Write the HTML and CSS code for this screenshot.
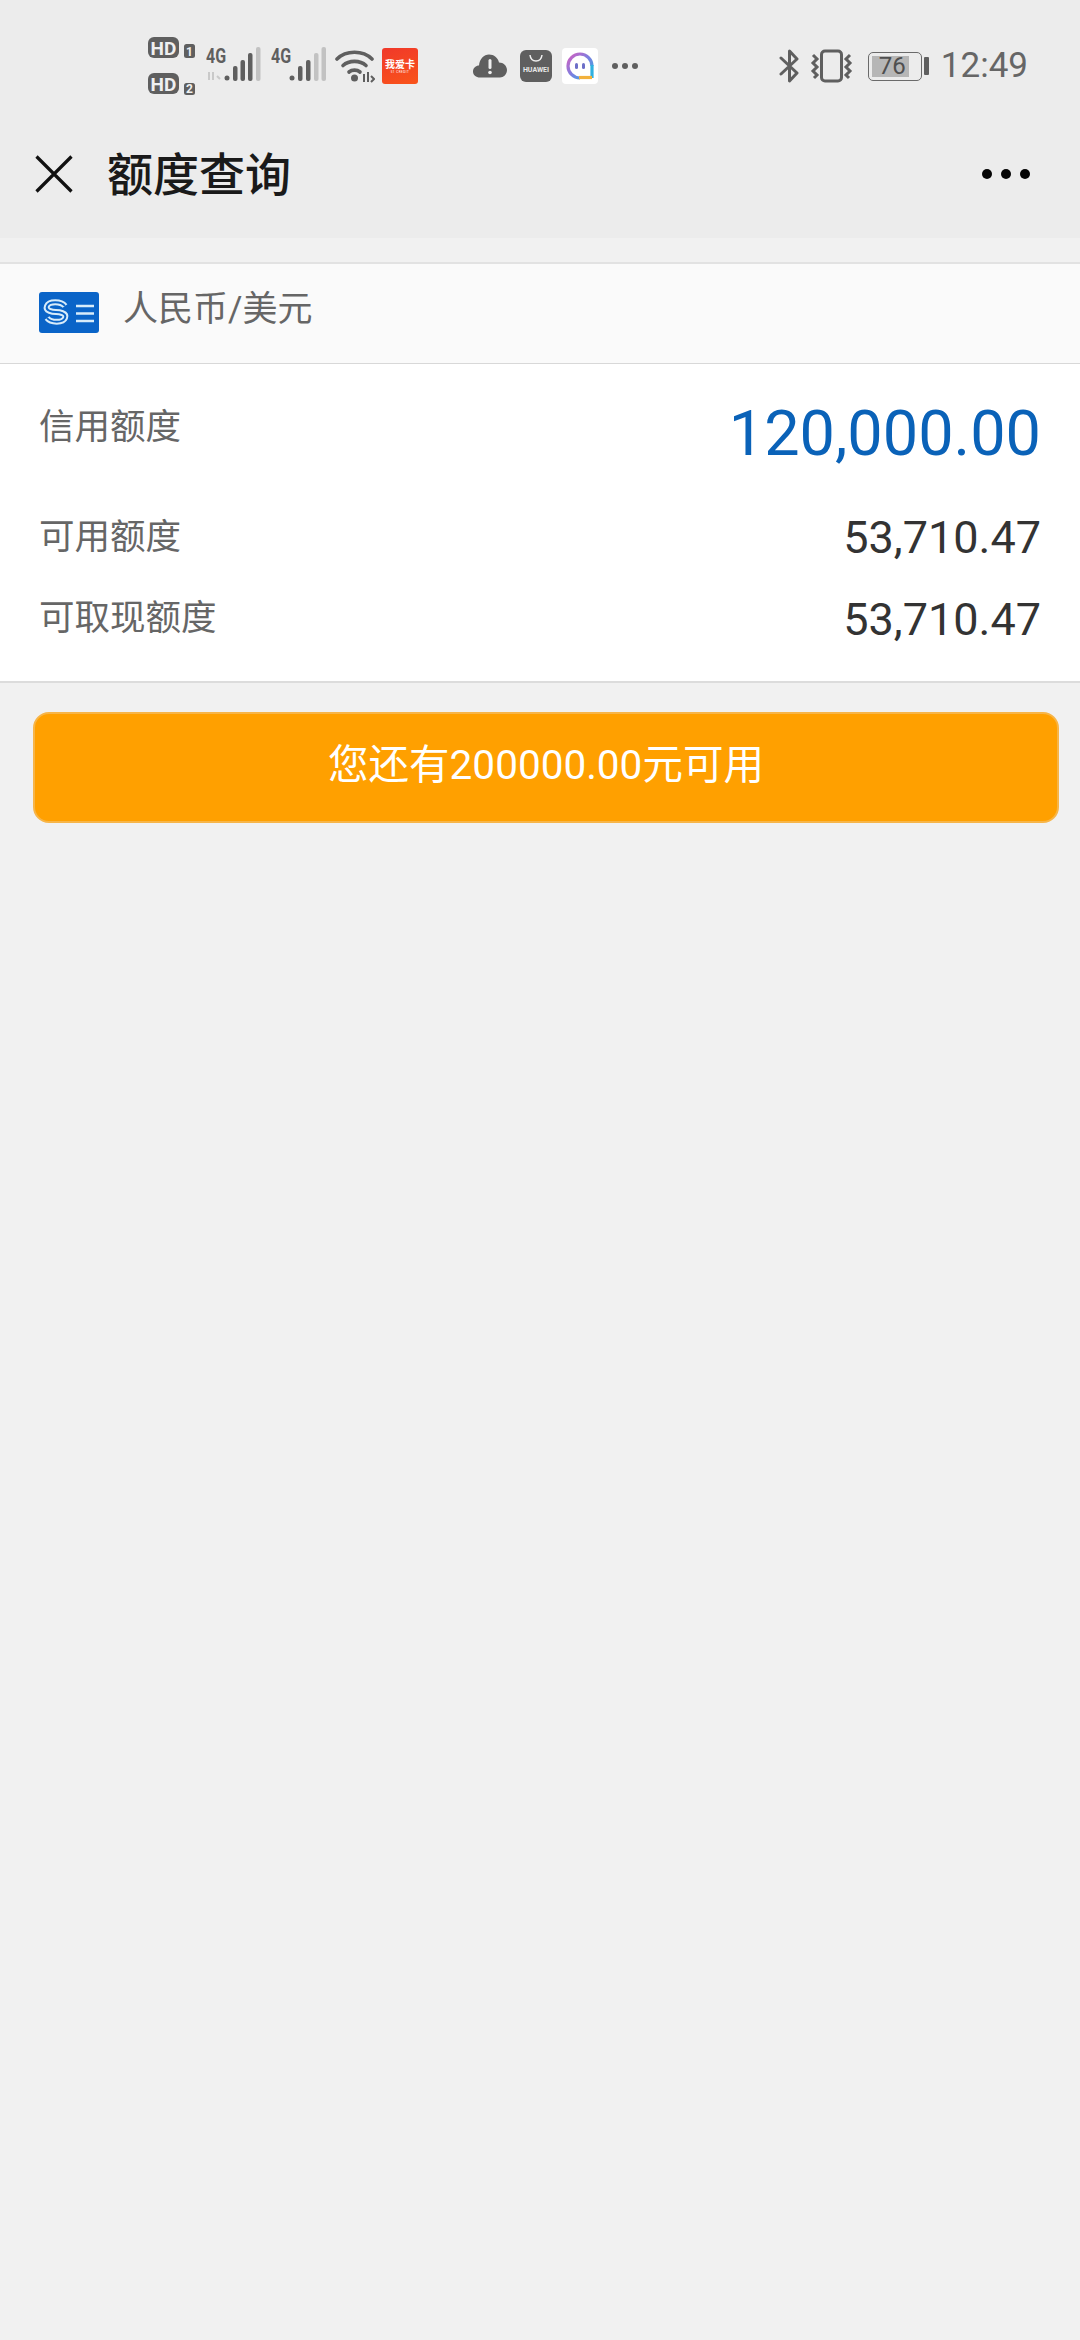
FILE: index.html
```html
<!DOCTYPE html>
<html lang="zh">
<head>
  <meta charset="UTF-8" />
  <meta name="viewport" content="width=device-width, initial-scale=1.0"/>
  <title>额度查询</title>
  <link rel="stylesheet" href="styles.css">
</head>
<body>

<div class="top">
  <div class="statusbar">
    <!-- sim badges -->
    <svg class="ic ic-hd" width="48" height="60" viewBox="0 0 48 60">
      <rect x="0" y="1" width="31" height="21" rx="6" fill="#5f5f5f"/>
      <text x="15.5" y="18.500" class="hd-txt">HD</text>
      <rect x="36" y="8" width="11" height="14" rx="2.5" fill="#5f5f5f"/>
      <text x="41.5" y="20" class="hd-num">1</text>
      <rect x="0" y="37" width="31" height="21" rx="6" fill="#5f5f5f"/>
      <text x="15.5" y="54.500" class="hd-txt">HD</text>
      <rect x="36" y="47" width="11" height="12" rx="2.5" fill="#5f5f5f"/>
      <text x="41.5" y="57" class="hd-num">2</text>
    </svg>
    <!-- sim 1 signal -->
    <svg class="ic ic-sig1" width="56" height="40" viewBox="0 -4 56 40">
      <text transform="translate(0 16) scale(.8 1)" class="g-txt">4G</text>
      <path d="M3 25v8M7 25v8M11 29l3 3" stroke="#c9c9c9" stroke-width="2" fill="none"/>
      <circle cx="21" cy="31" r="2.500" fill="#5f5f5f"/>
      <rect x="27" y="19" width="4.500" height="15" rx="2" fill="#5f5f5f"/>
      <rect x="34.500" y="13" width="4.500" height="21" rx="2" fill="#5f5f5f"/>
      <rect x="42" y="6" width="4.500" height="28" rx="2" fill="#5f5f5f"/>
      <rect x="50" y="0" width="4.500" height="34" rx="2" fill="#c2c2c2"/>
    </svg>
    <!-- sim 2 signal -->
    <svg class="ic ic-sig2" width="56" height="40" viewBox="0 -4 56 40">
      <text transform="translate(0 16) scale(.8 1)" class="g-txt">4G</text>
      <circle cx="21" cy="31" r="2.500" fill="#5f5f5f"/>
      <rect x="27" y="19" width="4.500" height="15" rx="2" fill="#5f5f5f"/>
      <rect x="35" y="13" width="4.500" height="21" rx="2" fill="#5f5f5f"/>
      <rect x="43" y="6" width="4.500" height="28" rx="2" fill="#c2c2c2"/>
      <rect x="50.500" y="0" width="4.500" height="34" rx="2" fill="#c2c2c2"/>
    </svg>
    <!-- wifi -->
    <svg class="ic ic-wifi" width="40" height="34" viewBox="0 0 40 34">
      <g fill="none" stroke="#5f5f5f" stroke-width="3.600" stroke-linecap="round">
        <path d="M2 10C11 1 28 1 37 10"/>
        <path d="M8 16.500C14 11 25 11 31 16.500"/>
        <path d="M14 23C17 20.500 22 20.500 25 23"/>
      </g>
      <circle cx="19.500" cy="29" r="3.500" fill="#5f5f5f"/>
      <path d="M29 25v8M33 23v10M36 27l3 3-3 3" stroke="#5f5f5f" stroke-width="2" fill="none"/>
    </svg>
    <div class="app-red">
      <span class="app-red-name">我爱卡</span>
      <span class="app-red-sub">51 CREDIT</span>
    </div>
    <!-- cloud with warning -->
    <svg class="ic ic-cloud" width="34" height="24" viewBox="0 0 34 24">
      <path d="M7 23.500C3 23.500 0 21 0 17.500C0 14 3 11.500 6 11.500C6.500 5 11 0.500 16 0.500C21 0.500 25 4 26 8.500C30.500 8.500 34 12 34 16C34 20.500 30.500 23.500 27 23.500Z" fill="#5f5f5f"/>
      <rect x="15.500" y="5" width="3" height="10" rx="1.500" fill="#f0f0f0"/>
      <circle cx="17" cy="18.500" r="1.800" fill="#f0f0f0"/>
    </svg>
    <div class="app-huawei">
      <svg width="14" height="8" viewBox="0 0 14 8" class="bag-handle"><path d="M1 1C2 9 12 9 13 1" fill="none" stroke="#eee" stroke-width="1.500"/></svg>
      <span class="app-huawei-name">HUAWEI</span>
    </div>
    <div class="app-chat">
      <svg width="28" height="28" viewBox="0 0 28 28">
        <defs>
          <linearGradient id="ring" x1="0" y1="0" x2="1" y2="1">
            <stop offset="0" stop-color="#d45fc0"/>
            <stop offset="0.500" stop-color="#7b7fe0"/>
            <stop offset="1" stop-color="#2fb0e0"/>
          </linearGradient>
        </defs>
        <path d="M26 14A12 12 0 1 0 14 26" fill="none" stroke="url(#ring)" stroke-width="3.200"/>
        <path d="M26 13V26" stroke="#2fb0e0" stroke-width="3.200"/>
        <path d="M13 25.500H26" stroke="#f2b13c" stroke-width="3.200"/>
        <rect x="9" y="11" width="3" height="6" rx="1.500" fill="#6d6fc8"/>
        <rect x="16" y="11" width="3" height="6" rx="1.500" fill="#6d6fc8"/>
      </svg>
    </div>
    <div class="more-dots"><i></i><i></i><i></i></div>

    <div class="status-right">
      <svg class="ic" width="21" height="34" viewBox="0 0 21 34">
        <path d="M2 9L18 24L10.500 32V2L18 10L2 25" fill="none" stroke="#5f5f5f" stroke-width="3" stroke-linejoin="round" stroke-linecap="round"/>
      </svg>
      <svg class="ic ic-vib" width="43" height="34" viewBox="0 0 43 34">
        <rect x="11.500" y="2" width="20" height="30" rx="3.500" fill="none" stroke="#5f5f5f" stroke-width="3"/>
        <path d="M3 6l4 4-4 4 4 4-4 4 4 4-3 3M40 6l-4 4 4 4-4 4 4 4-4 4 3 3" fill="none" stroke="#5f5f5f" stroke-width="3"/>
      </svg>
      <div class="battery">
        <div class="battery-body">
          <div class="battery-fill"></div>
          <span class="battery-num">76</span>
        </div>
        <div class="battery-nub"></div>
      </div>
      <span class="clock">12:49</span>
    </div>
  </div>

  <div class="navbar">
    <svg class="nav-close" width="38" height="38" viewBox="0 0 38 38">
      <path d="M1.500 1.500L36.500 36.500M36.500 1.500L1.500 36.500" stroke="#111" stroke-width="3.200"/>
    </svg>
    <h1 class="nav-title">额度查询</h1>
    <div class="nav-more"><i></i><i></i><i></i></div>
  </div>
</div>

<div class="card-head">
  <svg class="card-logo" width="60" height="41" viewBox="0 0 60 41">
    <rect width="60" height="41" rx="3" fill="#0a64c8"/>
    <path d="M26 14C22 9 10 9 8 14C6 19 14 20 17 20C20 20 28 21 26 26C24 31 12 31 8 26" fill="none" stroke="#d8ecfa" stroke-width="6"/>
    <path d="M26 14C22 9 10 9 8 14C6 19 14 20 17 20C20 20 28 21 26 26C24 31 12 31 8 26" fill="none" stroke="#0a64c8" stroke-width="2"/>
    <path d="M37 14H55M37 21.500H55M37 29H55" stroke="#d8ecfa" stroke-width="2.400"/>
  </svg>
  <span class="card-currency">人民币/美元</span>
</div>

<div class="quota">
  <div class="quota-row quota-main">
    <span class="quota-label">信用额度</span>
    <span class="quota-big">120,000.00</span>
  </div>
  <div class="quota-row quota-avail">
    <span class="quota-label">可用额度</span>
    <span class="quota-val">53,710.47</span>
  </div>
  <div class="quota-row quota-cash">
    <span class="quota-label">可取现额度</span>
    <span class="quota-val">53,710.47</span>
  </div>
</div>

<button class="cta" type="button">您还有200000.00元可用</button>

</body>
</html>
```

FILE: styles.css
```css
html, body {
  margin: 0; padding: 0; height: 100%;
  font-family: Roboto, "Noto Sans CJK SC", sans-serif;
  background: #f1f1f1; overflow: hidden;
}

.top { background: #ececec; height: 238px; }

.statusbar {
  height: 132px; box-sizing: border-box;
  padding: 0 52px 0 148px;
  display: flex; align-items: center;
}
.ic { display: block; flex: none; }
.ic-sig1 { margin-left: 10px; margin-top: -6px; }
.ic-sig2 { margin-left: 9px; margin-top: -6px; }
.ic-wifi { margin-left: 8px; }
.ic-cloud { margin-left: 55px; }
.ic-vib { margin-left: 10px; }

.hd-txt { font: 700 19px Roboto, sans-serif; fill: #f0f0f0; text-anchor: middle; }
.hd-num { font: 700 12px Roboto, sans-serif; fill: #f0f0f0; text-anchor: middle; }
.g-txt { font: 700 20px Roboto, sans-serif; fill: #5f5f5f; }

.app-red {
  width: 36px; height: 36px; margin-left: 7px; flex: none;
  border-radius: 3px;
  background: linear-gradient(160deg, #f0382a, #f9541a);
  display: flex; flex-direction: column; align-items: center; justify-content: center;
  color: #fff;
}
.app-red-name { font: 700 10px/12px "Noto Sans CJK SC", sans-serif; }
.app-red-sub { font: 400 3px/4px Roboto, sans-serif; letter-spacing: .5px; }

.app-huawei {
  width: 32px; height: 32px; margin-left: 13px; flex: none;
  border-radius: 6px; background: #5f5f5f;
  display: flex; flex-direction: column; align-items: center;
  color: #e8e8e8;
}
.bag-handle { display: block; margin-top: 4px; }
.app-huawei-name { font: 700 7px/10px Roboto, sans-serif; margin-top: 3px; }

.app-chat {
  width: 36px; height: 36px; margin-left: 10px; flex: none;
  border-radius: 4px; background: #fff;
  display: flex; align-items: center; justify-content: center;
}

.more-dots { display: flex; gap: 4px; margin-left: 14px; }
.more-dots i { width: 6px; height: 6px; border-radius: 50%; background: #5f5f5f; }

.status-right { margin-left: auto; display: flex; align-items: center; }

.battery { display: flex; align-items: center; margin-left: 15px; }
.battery-body {
  width: 54px; height: 29px; box-sizing: border-box;
  border: 1.5px solid #6a6a6a; border-radius: 5px;
  padding: 3px; position: relative;
}
.battery-fill { width: 37px; height: 100%; background: #b6b6b6; }
.battery-num {
  position: absolute; left: 10px; top: 0;
  font: 400 24px/26px Roboto, sans-serif; color: #4f4f4f;
}
.battery-nub { width: 5px; height: 18px; margin-left: 2px; background: #5f5f5f; border-radius: 1px; }
.clock { margin-left: 12px; font: 400 35px/40px Roboto, sans-serif; color: #666; }

.navbar {
  height: 106px; box-sizing: border-box;
  padding: 0 50px 22px 35px;
  display: flex; align-items: center;
}
.nav-close { flex: none; }
.nav-title {
  margin: 0 0 6px 34px;
  font: 500 46px/60px "Noto Sans CJK SC", sans-serif; color: #1a1a1a;
}
.nav-more { margin-left: auto; display: flex; gap: 9px; }
.nav-more i { width: 10px; height: 10px; border-radius: 50%; background: #050505; }

.card-head {
  margin-top: 24px; height: 102px; box-sizing: border-box;
  background: #fafafa;
  border-top: 2px solid #e2e2e2; border-bottom: 1px solid #d8d8d8;
  padding-left: 39px;
  display: flex; align-items: center;
}
.card-logo { flex: none; margin-top: -2px; }
.card-currency {
  margin-left: 24px; margin-top: -7px;
  font-size: 35px; line-height: 48px; color: #666;
}

.quota {
  background: #fff;
  height: 319px; box-sizing: border-box;
  border-bottom: 2px solid #dcdcdc;
  padding: 24px 39px 0 39px;
}
.quota-row { display: flex; justify-content: space-between; align-items: flex-start; }
.quota-label { font-size: 35.500px; line-height: 48px; color: #666; }
.quota-big { font-size: 63px; line-height: 80px; color: #0a62b8; }
.quota-val { font-size: 45px; line-height: 56px; color: #333; }
.quota-main { height: 112px; padding-top: 15px; box-sizing: border-box; }
.quota-avail { height: 94px; padding-top: 13px; box-sizing: border-box; }
.quota-cash { height: 70px; box-sizing: border-box; }
.quota-main .quota-big { margin-top: -9px; }
.quota-avail .quota-val { margin-top: -3px; }
.quota-cash .quota-val { margin-top: -2px; }

.cta {
  display: block; margin: 29px 21px 0 33px;
  width: 1026px; height: 111px; box-sizing: border-box;
  background: #ffa000; border: 2px solid #f7b548; border-radius: 16px;
  color: #fff; padding: 0 0 6px;
  font: 400 40.500px/56px Roboto, "Noto Sans CJK SC", sans-serif;
}
```
